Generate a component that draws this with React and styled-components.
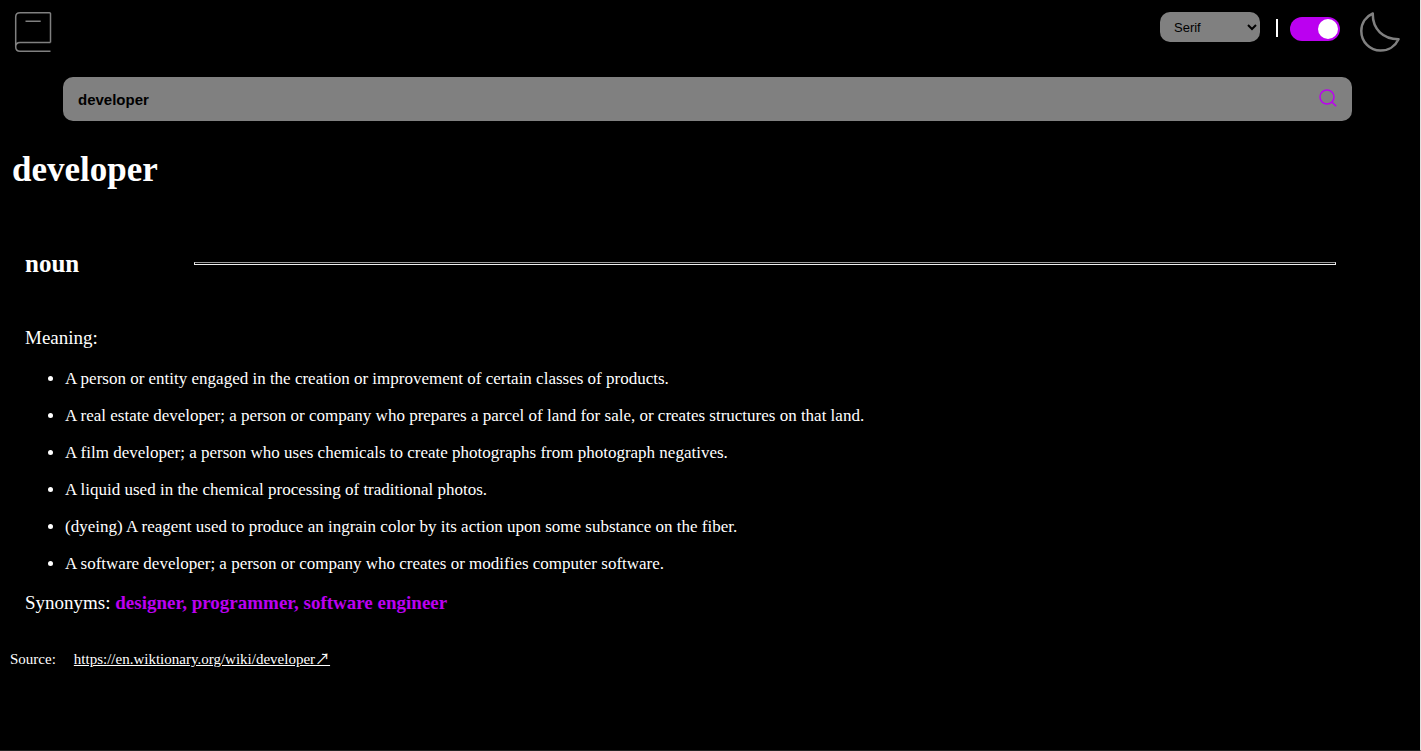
import React, { useState } from "react";
import styled, { createGlobalStyle } from "styled-components";

const GlobalStyle = createGlobalStyle`
  * { box-sizing: border-box; }
  body { margin: 0; background: #000; }
`;

const Page = styled.div`
  min-height: 100vh;
  background: #000;
  color: #fff;
  font-family: "Liberation Serif", "Times New Roman", serif;
  border-right: 1px solid #e4e2e0;
  border-bottom: 1px solid #222;
`;

const Header = styled.header`
  display: flex;
  justify-content: space-between;
  align-items: flex-start;
  padding: 12px 20px 0 13px;
`;

const Controls = styled.div`
  display: flex;
  align-items: flex-start;
`;

const FontSelect = styled.select`
  width: 100px;
  height: 30px;
  padding: 0 0 0 10px;
  border: 0;
  border-radius: 10px;
  background: #808080;
  color: #000;
  font-family: "Liberation Sans", Arial, sans-serif;
  font-size: 13px;
`;

const Divider = styled.span`
  width: 2px;
  height: 18px;
  margin: 7px 12px 0 16px;
  background: #fff;
`;

const Switch = styled.label`
  display: flex;
  margin: 5px 20px 0 0;
  cursor: pointer;
`;

const SwitchInput = styled.input`
  appearance: none;
  display: flex;
  justify-content: flex-end;
  align-items: center;
  width: 50px;
  height: 24px;
  margin: 0;
  padding: 2px;
  border-radius: 12px;
  background: #bb00f0;

  &::before {
    content: "";
    width: 20px;
    height: 20px;
    border-radius: 50%;
    background: #fff;
  }
  &:not(:checked) {
    justify-content: flex-start;
    background: #808080;
  }
`;

const SearchForm = styled.form`
  display: flex;
  align-items: center;
  height: 44px;
  margin: 25px 68px 0 63px;
  padding: 0 15px;
  border-radius: 10px;
  background: #808080;
`;

const SearchInput = styled.input`
  flex: 1;
  min-width: 0;
  padding: 0;
  border: 0;
  outline: 0;
  background: transparent;
  color: #000;
  font-family: "Liberation Sans", Arial, sans-serif;
  font-size: 15px;
  font-weight: 700;
`;

const SearchButton = styled.button`
  display: flex;
  padding: 0 0 2px;
  border: 0;
  background: transparent;
  color: #bb00f0;
`;

const Word = styled.h1`
  margin: 29px 12px 0;
  font-size: 35px;
  line-height: 40px;
`;

const Entry = styled.section`
  margin: 58px 84px 0 25px;
`;

const EntryHead = styled.div`
  display: flex;
  align-items: center;
`;

const PartOfSpeech = styled.h2`
  width: 169px;
  margin: 0;
  padding-top: 2px;
  font-size: 25px;
  line-height: 28px;
`;

const Rule = styled.hr`
  flex: 1;
  height: 3px;
  margin: 0;
  border: 1px solid #eee;
  border-top-color: #9a9a9a;
`;

const Label = styled.p`
  margin: 0;
  font-size: 19px;
  line-height: 22px;
`;

const MeaningLabel = styled(Label)`
  margin-top: 49px;
`;

const Meanings = styled.ul`
  margin: 20px 0 19px;
  padding-left: 40px;
  font-size: 17px;
  line-height: 19px;
`;

const Meaning = styled.li`
  & + & { margin-top: 18px; }
`;

const Synonyms = styled.strong`
  color: #bb00f0;
`;

const Source = styled.footer`
  display: flex;
  gap: 18px;
  margin: 36px 10px 0;
  font-size: 15px;
  line-height: 18px;
`;

const SourceLink = styled.a`
  color: #fff;
`;

const Arrow = styled.span`
  font-family: "Noto Sans CJK JP", sans-serif;
  line-height: 1;
`;

const meanings = [
  "A person or entity engaged in the creation or improvement of certain classes of products.",
  "A real estate developer; a person or company who prepares a parcel of land for sale, or creates structures on that land.",
  "A film developer; a person who uses chemicals to create photographs from photograph negatives.",
  "A liquid used in the chemical processing of traditional photos.",
  "(dyeing) A reagent used to produce an ingrain color by its action upon some substance on the fiber.",
  "A software developer; a person or company who creates or modifies computer software.",
];

const BookIcon = () => (
  <svg width="40" height="40" viewBox="0 0 40 40" fill="none" stroke="#808080" strokeWidth="1.5" strokeLinejoin="round" aria-hidden="true">
    <path d="M37.5 30.5V1.8Q37.5 .8 36.5 .8H7C4.5 .8 2.7 2.6 2.7 5V35C2.7 37.5 4.5 39.2 7 39.2H37.5M2.7 35C2.7 32.3 4.5 30.5 7 30.5H37.5M12.5 9.3H27.7" />
  </svg>
);

const MoonIcon = () => (
  <svg width="40" height="40" viewBox="0 0 40 40" fill="none" stroke="#808080" strokeWidth="2.5" strokeLinejoin="round" aria-hidden="true">
    <path d="M12.8 1.5C5.8 4.5 1.3 11 1.3 19C1.3 30 10 38.6 20.5 38.6C28.5 38.6 35.3 34.2 38.5 27.2C23.5 27.2 12.3 17.5 12.8 1.5Z" />
  </svg>
);

const SearchIcon = () => (
  <svg width="18" height="18" viewBox="0 0 18 18" fill="none" stroke="currentColor" strokeWidth="1.5" aria-hidden="true">
    <circle cx="8" cy="8" r="7" />
    <path d="M12.6 12.6L17.2 17.2" />
  </svg>
);

export default function App() {
  const [word, setWord] = useState("developer");
  const [dark, setDark] = useState(true);
  return (
    <Page>
      <GlobalStyle />
      <Header>
        <BookIcon />
        <Controls>
          <FontSelect aria-label="Font" defaultValue="Serif">
            <option>Serif</option>
          </FontSelect>
          <Divider />
          <Switch>
            <SwitchInput
              type="checkbox"
              aria-label="Dark mode"
              checked={dark}
              onChange={(e) => setDark(e.target.checked)}
            />
          </Switch>
          <MoonIcon />
        </Controls>
      </Header>
      <main>
        <SearchForm onSubmit={(e) => e.preventDefault()}>
          <SearchInput aria-label="Search word" value={word} onChange={(e) => setWord(e.target.value)} />
          <SearchButton aria-label="Search">
            <SearchIcon />
          </SearchButton>
        </SearchForm>
        <Word>developer</Word>
        <Entry>
          <EntryHead>
            <PartOfSpeech>noun</PartOfSpeech>
            <Rule />
          </EntryHead>
          <MeaningLabel>Meaning:</MeaningLabel>
          <Meanings>
            {meanings.map((m) => (
              <Meaning key={m}>{m}</Meaning>
            ))}
          </Meanings>
          <Label>
            Synonyms: <Synonyms>designer, programmer, software engineer</Synonyms>
          </Label>
        </Entry>
      </main>
      <Source>
        <span>Source:</span>
        <SourceLink href="https://en.wiktionary.org/wiki/developer">
          https://en.wiktionary.org/wiki/developer<Arrow>↗</Arrow>
        </SourceLink>
      </Source>
    </Page>
  );
}
